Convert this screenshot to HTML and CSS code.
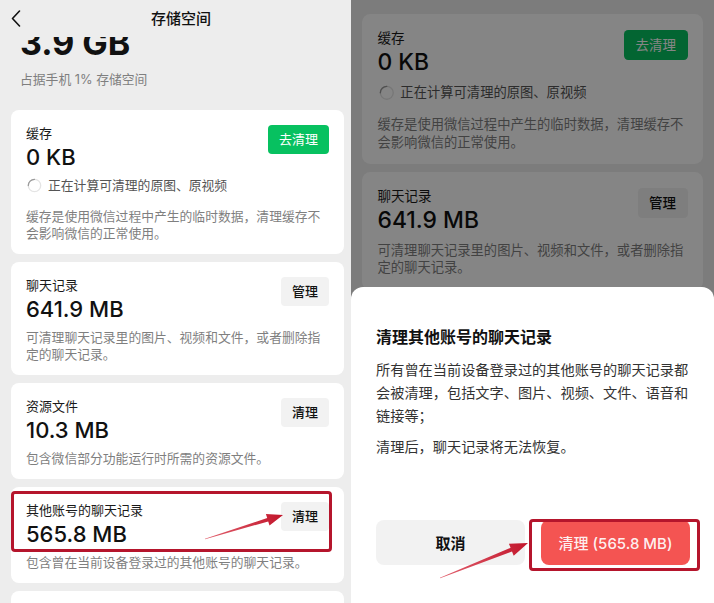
FILE: index.html
```html
<!DOCTYPE html>
<html lang="zh-CN">
<head>
<meta charset="utf-8">
<title>存储空间</title>
<link rel="stylesheet" href="styles.css">
</head>
<body>
<div class="page">
  <section class="panel panel-left">
    <header class="nav">
      <svg class="back" width="10" height="17" viewBox="0 0 10 17"><path d="M8.5 1 L1.5 8.5 L8.5 16" fill="none" stroke="#111" stroke-width="1.6" stroke-linecap="round" stroke-linejoin="round"/></svg>
      <h1 class="nav-title">存储空间</h1>
      <span></span>
    </header>
    <div class="scroll">
      <div class="summary">
        <div class="total">3.9 GB</div>
        <div class="total-sub">占据手机 1% 存储空间</div>
      </div>
      <div class="cards">
        <div class="card">
          <div class="card-head">
            <div>
              <div class="card-label">缓存</div>
              <div class="card-value">0 KB</div>
            </div>
            <button class="btn btn-green">去清理</button>
          </div>
          <div class="calc">
            <svg class="spin" width="15" height="15" viewBox="0 0 15 15"><circle cx="7.5" cy="7.5" r="6.2" fill="none" stroke="#e4e4e4" stroke-width="1.3"/><path d="M1.3 7.5 A6.2 6.2 0 0 1 7.5 1.3" fill="none" stroke="#9a9a9a" stroke-width="1.3" stroke-linecap="round"/></svg>
            <span>正在计算可清理的原图、原视频</span>
          </div>
          <p class="card-desc">缓存是使用微信过程中产生的临时数据，清理缓存不会影响微信的正常使用。</p>
        </div>
        <div class="card">
          <div class="card-head">
            <div>
              <div class="card-label">聊天记录</div>
              <div class="card-value">641.9 MB</div>
            </div>
            <button class="btn btn-gray">管理</button>
          </div>
          <p class="card-desc">可清理聊天记录里的图片、视频和文件，或者删除指定的聊天记录。</p>
        </div>
        <div class="card">
          <div class="card-head">
            <div>
              <div class="card-label">资源文件</div>
              <div class="card-value">10.3 MB</div>
            </div>
            <button class="btn btn-gray">清理</button>
          </div>
          <p class="card-desc">包含微信部分功能运行时所需的资源文件。</p>
        </div>
        <div class="card">
          <div class="card-head">
            <div>
              <div class="card-label">其他账号的聊天记录</div>
              <div class="card-value">565.8 MB</div>
            </div>
            <button class="btn btn-gray">清理</button>
          </div>
          <p class="card-desc">包含曾在当前设备登录过的其他账号的聊天记录。</p>
        </div>
        <div class="card card-tail"></div>
      </div>
    </div>
  </section>

  <section class="panel panel-right">
    <div class="right-content">
      <div class="card">
        <div class="card-head">
          <div>
            <div class="card-label">缓存</div>
            <div class="card-value">0 KB</div>
          </div>
          <button class="btn btn-green">去清理</button>
        </div>
        <div class="calc">
          <svg class="spin" width="15" height="15" viewBox="0 0 15 15"><circle cx="7.5" cy="7.5" r="6.2" fill="none" stroke="#e4e4e4" stroke-width="1.3"/><path d="M1.3 7.5 A6.2 6.2 0 0 1 7.5 1.3" fill="none" stroke="#9a9a9a" stroke-width="1.3" stroke-linecap="round"/></svg>
          <span>正在计算可清理的原图、原视频</span>
        </div>
        <p class="card-desc">缓存是使用微信过程中产生的临时数据，清理缓存不会影响微信的正常使用。</p>
      </div>
      <div class="card">
        <div class="card-head">
          <div>
            <div class="card-label">聊天记录</div>
            <div class="card-value">641.9 MB</div>
          </div>
          <button class="btn btn-gray">管理</button>
        </div>
        <p class="card-desc">可清理聊天记录里的图片、视频和文件，或者删除指定的聊天记录。</p>
      </div>
    </div>
    <div class="dim"></div>
    <div class="sheet">
      <h2 class="sheet-title">清理其他账号的聊天记录</h2>
      <div class="sheet-body">
        <p>所有曾在当前设备登录过的其他账号的聊天记录都会被清理，包括文字、图片、视频、文件、语音和链接等；</p>
        <p>清理后，聊天记录将无法恢复。</p>
      </div>
      <div class="sheet-actions">
        <button class="sheet-btn cancel">取消</button>
        <button class="sheet-btn confirm">清理 (565.8 MB)</button>
      </div>
    </div>
  </section>

  <div class="highlight hl-left"></div>
  <div class="highlight hl-right"></div>
  <svg class="annot" width="714" height="603" viewBox="0 0 714 603">
    <defs>
      <linearGradient id="ga" x1="205" y1="539" x2="283" y2="515" gradientUnits="userSpaceOnUse">
        <stop offset="0" stop-color="#e2626f"/>
        <stop offset="1" stop-color="#c2152b"/>
      </linearGradient>
      <linearGradient id="gb" x1="440" y1="578" x2="528" y2="543" gradientUnits="userSpaceOnUse">
        <stop offset="0" stop-color="#e2626f"/>
        <stop offset="1" stop-color="#c2152b"/>
      </linearGradient>
    </defs>
    <polygon fill="url(#ga)" points="205.1,539.3 268.2,521.4 269.5,525.4 283,515 265.9,514 267.2,518 204.9,538.7"/>
    <polygon fill="url(#gb)" points="440.1,578.3 512,551.6 513.7,555.7 528,543 508.9,543.7 510.6,547.8 439.9,577.7"/>
  </svg>
</div>
</body>
</html>
```

FILE: styles.css
```css
* { box-sizing: border-box; margin: 0; padding: 0; }
html, body { width: 714px; height: 603px; overflow: hidden; }
body {
  font-family: "Inter", "Noto Sans CJK SC", sans-serif;
  color: #111;
  background: #ededed;
}
.page { position: relative; display: flex; width: 714px; height: 603px; }

.panel { position: relative; height: 603px; overflow: hidden; background: #ededed; }
.panel-left { width: 351px; display: flex; flex-direction: column; }
.panel-right { flex: 1; }

.nav {
  height: 37px;
  display: grid;
  grid-template-columns: 1fr auto 1fr;
  align-items: center;
  padding-left: 11px;
}
.back { display: block; }
.nav-title { font-size: 15px; font-weight: 500; line-height: 20px; color: #111; }

.scroll { flex: 1; overflow: hidden; padding: 0 7px 0 11px; }
.summary { padding-left: 9px; }
.total { font-size: 34px; font-weight: 700; line-height: 40px; margin-top: -14px; color: #111; }
.total-sub { font-size: 12.8px; line-height: 18px; color: #7f7f7f; margin-top: 8px; }

.cards { margin-top: 21px; display: flex; flex-direction: column; gap: 8px; }
.card { background: #fff; border-radius: 8px; padding: 14px 15px 12px; }
.card-tail { height: 40px; }
.card-head { display: flex; justify-content: space-between; align-items: flex-start; }
.card-label { font-size: 13px; line-height: 18px; color: #1a1a1a; }
.card-value { font-size: 22px; line-height: 28px; margin-top: 1px; font-weight: 500; color: #111; }
.card-desc { font-size: 12.8px; line-height: 17px; color: #7f7f7f; margin-top: 6px; }
.calc {
  display: flex; align-items: center; gap: 6px;
  margin-top: 6px; padding-left: 1px;
  font-size: 12.8px; line-height: 17px; color: #555;
}
.calc + .card-desc { margin-top: 14px; }

.btn {
  height: 29px; padding: 0 11px; margin-top: 1px;
  border: 0; border-radius: 4px;
  font-family: inherit; font-size: 13px; line-height: 29px;
}
.btn-green { background: #07c160; color: #fff; }
.btn-gray { background: #f2f2f2; color: #111; font-weight: 500; }

.right-content {
  zoom: 1.04;
  padding: 13.5px 10.5px 0;
  display: flex; flex-direction: column; gap: 8px;
}
.dim { position: absolute; inset: 0; background: rgba(0, 0, 0, 0.48); }

.sheet {
  position: absolute; left: 0; right: 0; top: 287px; bottom: 0;
  background: #fff;
  border-radius: 12px 12px 0 0;
  padding: 38px 24px 0 25px;
}
.sheet-title { font-size: 16px; font-weight: 700; line-height: 24px; color: #111; }
.sheet-body { margin-top: 9px; font-size: 14.2px; line-height: 23px; color: #333; }
.sheet-body p + p { margin-top: 8px; }
.sheet-actions { display: flex; gap: 16px; margin-top: 62px; }
.sheet-btn {
  flex: 1; height: 45px; border: 0; border-radius: 8px;
  font-family: inherit; font-size: 15px;
}
.cancel { background: #f2f2f2; color: #111; font-weight: 700; }
.confirm { background: #f45452; color: rgba(255, 255, 255, 0.93); font-weight: 500; }

.highlight {
  position: absolute;
  border: 3px solid #b5152c;
  border-radius: 4px;
  pointer-events: none;
}
.hl-left { left: 11px; top: 491px; width: 321px; height: 61px; }
.hl-right { left: 529px; top: 519px; width: 171px; height: 52px; }
.annot { position: absolute; left: 0; top: 0; pointer-events: none; }
```
